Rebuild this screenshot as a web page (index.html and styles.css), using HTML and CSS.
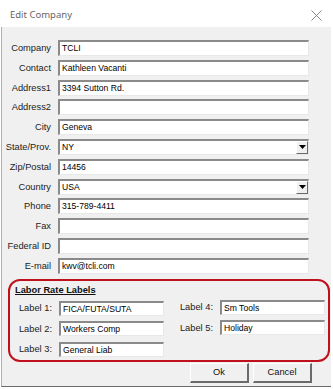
FILE: index.html
```html
<!DOCTYPE html>
<html>
<head>
<meta charset="utf-8">
<link rel="stylesheet" href="styles.css">
</head>
<body>
<div class="window">
  <div class="titlebar">
    <span class="title">Edit Company</span>
    <svg class="close" width="11" height="11" viewBox="0 0 11 11"><path d="M0.5 0.5 L10.5 10.5 M10.5 0.5 L0.5 10.5" stroke="#888" stroke-width="1" fill="none"/></svg>
  </div>
  <div class="client">
    <div class="form">
      <label>Company</label><div class="field">TCLI</div>
      <label>Contact</label><div class="field">Kathleen Vacanti</div>
      <label>Address1</label><div class="field">3394 Sutton Rd.</div>
      <label>Address2</label><div class="field"></div>
      <label>City</label><div class="field">Geneva</div>
      <label>State/Prov.</label><div class="field combo"><span>NY</span><span class="drop"><svg width="7" height="4" viewBox="0 0 7 4"><path d="M0 0 H7 L3.5 4 Z" fill="#000"/></svg></span></div>
      <label>Zip/Postal</label><div class="field">14456</div>
      <label>Country</label><div class="field combo"><span>USA</span><span class="drop"><svg width="7" height="4" viewBox="0 0 7 4"><path d="M0 0 H7 L3.5 4 Z" fill="#000"/></svg></span></div>
      <label>Phone</label><div class="field">315-789-4411</div>
      <label>Fax</label><div class="field"></div>
      <label>Federal ID</label><div class="field"></div>
      <label>E-mail</label><div class="field">kwv@tcli.com</div>
    </div>
    <div class="group">
      <div class="group-title">Labor Rate Labels</div>
      <div class="group-cols">
        <div class="col">
          <label>Label 1:</label><div class="field small">FICA/FUTA/SUTA</div>
          <label>Label 2:</label><div class="field small">Workers Comp</div>
          <label>Label 3:</label><div class="field small">General Liab</div>
        </div>
        <div class="col col2">
          <label>Label 4:</label><div class="field small">Sm Tools</div>
          <label>Label 5:</label><div class="field small">Holiday</div>
        </div>
      </div>
    </div>
    <div class="buttons">
      <button class="btn">Ok</button>
      <button class="btn">Cancel</button>
    </div>
  </div>
</div>
</body>
</html>
```
FILE: styles.css
```css
html, body {
  margin: 0;
  padding: 0;
  background: #ffffff;
}
body {
  width: 333px;
  height: 389px;
  overflow: hidden;
  font-family: "Liberation Sans", Arial, sans-serif;
  font-size: 9.3px;
  color: #222;
}
.window {
  width: 331px;
  height: 387px;
  display: flex;
  flex-direction: column;
}
.titlebar {
  height: 27px;
  flex: none;
  background: #ffffff;
  display: flex;
  align-items: center;
  justify-content: space-between;
  padding: 0 9px 0 10px;
}
.title {
  font-family: "Noto Sans", "Open Sans", sans-serif;
  font-size: 9.5px;
  color: #666;
  margin-top: 1px;
}
.close {
  margin-top: 3px;
}
.client {
  flex: 1;
  background: #f0f0f0;
  border-bottom: 1px solid #6a6a6a;
  border-left: 1px solid #b0b0b0;
  margin-left: 1px;
  padding-top: 13px;
  display: flex;
  flex-direction: column;
}
.form {
  display: grid;
  grid-template-columns: 49px 251px;
  column-gap: 7px;
  row-gap: 3.8px;
  align-items: center;
}
.form label {
  text-align: right;
  white-space: nowrap;
}
.field {
  box-sizing: border-box;
  height: 16px;
  background: #fff;
  border-top: 2px solid #8a8a8a;
  border-left: 2px solid #8a8a8a;
  border-right: 1px solid #e8e8e8;
  border-bottom: 1px solid #e8e8e8;
  padding: 0 2px;
  line-height: 13px;
  white-space: nowrap;
  overflow: hidden;
  color: #000;
  font-size: 8.6px;
}
.combo {
  display: flex;
  justify-content: space-between;
  align-items: center;
  padding-right: 0;
}
.drop {
  width: 12px;
  height: 13px;
  box-sizing: border-box;
  background: #f0f0f0;
  border-top: 1px solid #fff;
  border-left: 1px solid #fff;
  border-right: 1px solid #6a6a6a;
  border-bottom: 1px solid #6a6a6a;
  display: flex;
  align-items: center;
  justify-content: center;
}
.group {
  margin: 5px 0 0 6px;
  width: 322px;
  height: 83px;
  box-sizing: border-box;
  border: 2px solid #c0101c;
  border-radius: 12px;
  padding: 2px 0 0 5px;
}
.group-title {
  font-weight: bold;
  text-decoration: underline;
  color: #111;
  height: 14px;
  line-height: 14px;
}
.group-cols {
  display: flex;
  margin-top: 4px;
}
.col {
  display: grid;
  grid-template-columns: 37px 105px;
  column-gap: 7px;
  row-gap: 5.5px;
  align-items: center;
  align-content: start;
}
.col label {
  text-align: right;
  white-space: nowrap;
}
.col2 {
  margin-left: 12px;
  margin-top: -1px;
}
.small {
  height: 15px;
  line-height: 12px;
}
.buttons {
  display: flex;
  justify-content: flex-end;
  gap: 4px;
  padding: 1px 19px 0 0;
}
.btn {
  width: 59px;
  height: 20px;
  box-sizing: border-box;
  background: #f0f0f0;
  border-top: 1px solid #fff;
  border-left: 1px solid #fff;
  border-right: 2px solid #6a6a6a;
  border-bottom: 2px solid #6a6a6a;
  font-family: "Liberation Sans", Arial, sans-serif;
  font-size: 9.3px;
  color: #111;
  padding: 0;
}
```
